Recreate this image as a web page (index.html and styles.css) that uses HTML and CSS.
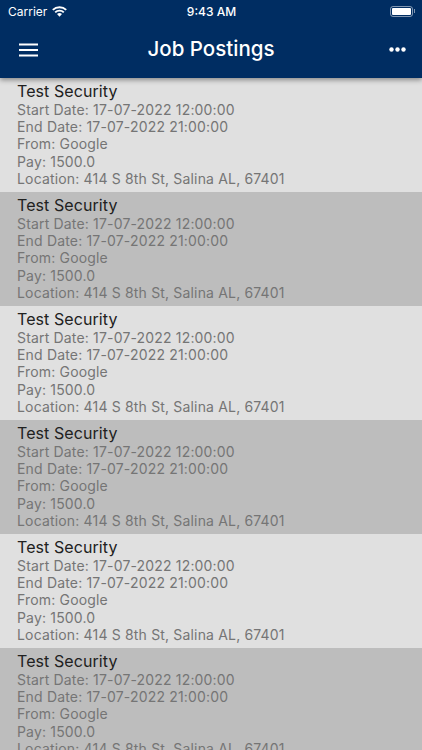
FILE: index.html
```html
<!DOCTYPE html>
<html lang="en">
<head>
<meta charset="utf-8">
<title>Job Postings</title>
<link rel="stylesheet" href="styles.css">
</head>
<body>
<div class="screen">
  <header class="top">
    <div class="status">
      <div class="status-left">
        <span>Carrier</span>
        <svg class="wifi" width="15" height="11" viewBox="0 0 15 11"><path fill="none" stroke="#fff" stroke-width="1.900" d="M.8 3.900A9.600 9.600 0 0 1 14.200 3.900M3.200 6.400A6.100 6.100 0 0 1 11.800 6.400"/><path fill="#fff" d="M5 8.100A3.600 3.600 0 0 1 10 8.100L7.500 10.800z"/></svg>
      </div>
      <span class="clock">9:43 AM</span>
      <div class="status-right">
        <span class="battery"><span class="battery-fill"></span></span><span class="battery-cap"></span>
      </div>
    </div>
    <div class="bar">
      <svg class="menu" width="19" height="14" viewBox="0 0 19 14"><path d="M0 1.500h19M0 7h19M0 12.500h19" stroke="#fff" stroke-width="1.900"/></svg>
      <h1 class="title">Job Postings</h1>
      <svg class="more" width="17" height="5" viewBox="0 0 17 5"><circle cx="2.500" cy="2.500" r="2.200" fill="#fff"/><circle cx="8.500" cy="2.500" r="2.200" fill="#fff"/><circle cx="14.500" cy="2.500" r="2.200" fill="#fff"/></svg>
    </div>
  </header>
  <main class="list">
    <article class="job"><h2>Test Security</h2><p>Start Date: 17-07-2022 12:00:00</p><p>End Date: 17-07-2022 21:00:00</p><p>From: Google</p><p>Pay: 1500.0</p><p>Location: 414 S 8th St, Salina AL, 67401</p></article>
    <article class="job"><h2>Test Security</h2><p>Start Date: 17-07-2022 12:00:00</p><p>End Date: 17-07-2022 21:00:00</p><p>From: Google</p><p>Pay: 1500.0</p><p>Location: 414 S 8th St, Salina AL, 67401</p></article>
    <article class="job"><h2>Test Security</h2><p>Start Date: 17-07-2022 12:00:00</p><p>End Date: 17-07-2022 21:00:00</p><p>From: Google</p><p>Pay: 1500.0</p><p>Location: 414 S 8th St, Salina AL, 67401</p></article>
    <article class="job"><h2>Test Security</h2><p>Start Date: 17-07-2022 12:00:00</p><p>End Date: 17-07-2022 21:00:00</p><p>From: Google</p><p>Pay: 1500.0</p><p>Location: 414 S 8th St, Salina AL, 67401</p></article>
    <article class="job"><h2>Test Security</h2><p>Start Date: 17-07-2022 12:00:00</p><p>End Date: 17-07-2022 21:00:00</p><p>From: Google</p><p>Pay: 1500.0</p><p>Location: 414 S 8th St, Salina AL, 67401</p></article>
    <article class="job"><h2>Test Security</h2><p>Start Date: 17-07-2022 12:00:00</p><p>End Date: 17-07-2022 21:00:00</p><p>From: Google</p><p>Pay: 1500.0</p><p>Location: 414 S 8th St, Salina AL, 67401</p></article>
  </main>
</div>
</body>
</html>
```
FILE: styles.css
```css
* { box-sizing: border-box; margin: 0; padding: 0; }
html, body { height: 100%; overflow: hidden; }
body { font-family: Inter, "Liberation Sans", sans-serif; background: #e0e0e0; }
.screen { width: 422px; height: 750px; overflow: hidden; display: flex; flex-direction: column; }
.top { position: relative; z-index: 1; height: 78px; flex: none; background: #002d62; color: #fff; box-shadow: 0 2px 5px rgba(0,0,0,.4); }
.status { height: 22px; padding: 0 7px 0 8px; display: grid; grid-template-columns: 1fr auto 1fr; align-items: center; font-size: 12px; }
.status-left { display: flex; align-items: center; gap: 5px; }
.clock { font-weight: 500; }
.status-right { display: flex; justify-content: flex-end; align-items: center; }
.battery { width: 23px; height: 11px; border: 1px solid rgba(255,255,255,.5); border-radius: 3px; padding: 1px; display: block; }
.battery-fill { display: block; height: 100%; background: #fff; border-radius: 1px; }
.battery-cap { width: 1px; height: 4px; background: rgba(255,255,255,.5); margin-left: 1px; }
.bar { height: 56px; padding: 0 16px 1px 19px; display: grid; grid-template-columns: 1fr auto 1fr; align-items: center; }
.more { justify-self: end; }
.title { font-size: 20.5px; font-weight: 500; line-height: 1; margin-right: 3px; }
.list { flex: 1; overflow: hidden; }
.job { height: 114px; padding: 4px 17px 0; background: #e0e0e0; }
.job:nth-child(even) { background: #bdbdbd; }
.job h2 { font-size: 16px; font-weight: 400; line-height: 18.7px; color: #212121; letter-spacing: .08px; }
.job p { font-size: 14px; line-height: 17.3px; color: #757575; white-space: nowrap; letter-spacing: .17px; }
```
